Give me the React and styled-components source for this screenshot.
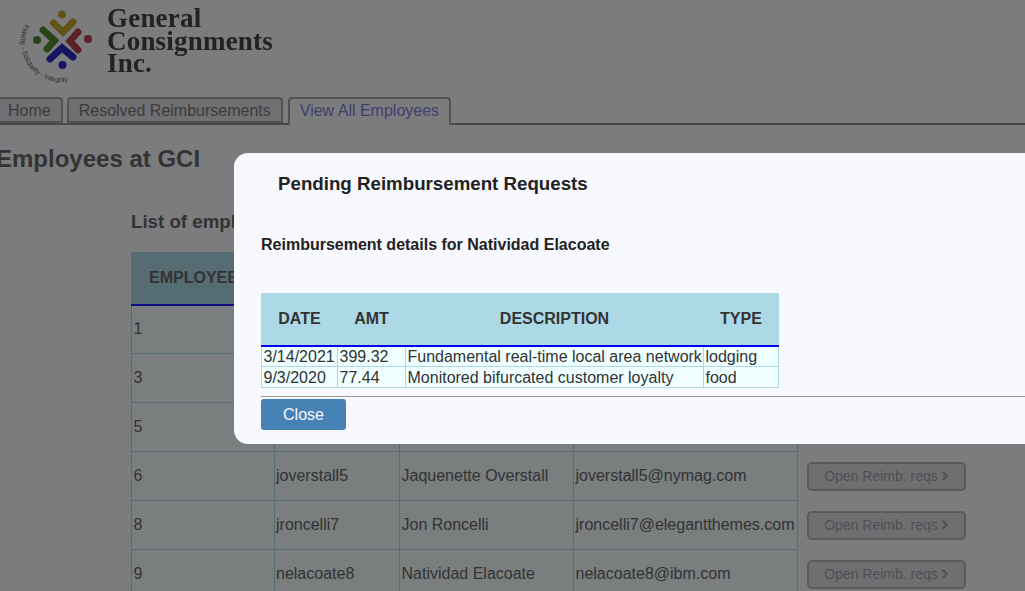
import React from 'react'
import styled, { createGlobalStyle } from 'styled-components'
import { ChevronRight } from 'lucide-react'

const GlobalStyle = createGlobalStyle`
  html, body {
    margin: 0;
    height: 100%;
    overflow: hidden;
    background: #f8f8ff;
  }
  body {
    font-family: "Liberation Sans", Arial, sans-serif;
    font-size: 16px;
    color: #666;
  }
`

const employees = [
  { id: 1, username: '', name: '', email: '' },
  { id: 3, username: '', name: '', email: '' },
  { id: 5, username: '', name: '', email: '' },
  { id: 6, username: 'joverstall5', name: 'Jaquenette Overstall', email: 'joverstall5@nymag.com' },
  { id: 8, username: 'jroncelli7', name: 'Jon Roncelli', email: 'jroncelli7@elegantthemes.com' },
  { id: 9, username: 'nelacoate8', name: 'Natividad Elacoate', email: 'nelacoate8@ibm.com' },
]

const requests = [
  { date: '3/14/2021', amt: '399.32', description: 'Fundamental real-time local area network', type: 'lodging' },
  { date: '9/3/2020', amt: '77.44', description: 'Monitored bifurcated customer loyalty', type: 'food' },
]

const Logo = () => (
  <LogoSvg viewBox="15 5 85 78" width="85" height="78">
    <defs>
      <path id="motto" d="M 25 24 A 40 40 0 0 0 80 77" fill="none" />
    </defs>
    <g fill="none" strokeWidth="7" strokeLinecap="round" strokeLinejoin="miter">
      <path d="M53.5 23 L63 32 L73 22" stroke="#c4a92c" />
      <path d="M78 32 L70 41 L78 50" stroke="#b8404c" />
      <path d="M50 59 L62 48 L73 57" stroke="#2a2ac4" />
      <path d="M43 30 L54.5 40.5 L47 49" stroke="#4f8a2c" />
    </g>
    <circle cx="62" cy="14.5" r="4" fill="#c4a92c" />
    <circle cx="88" cy="39" r="4" fill="#b8404c" />
    <circle cx="62.5" cy="65" r="4" fill="#2a2ac4" />
    <circle cx="37" cy="40" r="4" fill="#4f8a2c" />
    <text fontFamily="Liberation Sans" fontSize="7" fill="#555">
      <textPath href="#motto">Fidelity - Solidarity - Integrity</textPath>
    </text>
  </LogoSvg>
)

export default function App() {
  return (
    <>
      <GlobalStyle />
      <Page>
        <Header>
          <Logo />
          <Brand>General<br />Consignments<br />Inc.</Brand>
        </Header>
        <Tabs>
          <Tab>Home</Tab>
          <Tab>Resolved Reimbursements</Tab>
          <Tab $active>View All Employees</Tab>
        </Tabs>
        <Heading>Employees at GCI</Heading>
        <Content>
          <ListTitle>List of employees</ListTitle>
          <EmployeeTable>
            <thead>
              <tr>
                <EmployeeHead $width={142.5}>EMPLOYEE ID</EmployeeHead>
                <EmployeeHead $width={125.5} />
                <EmployeeHead $width={174} />
                <EmployeeHead $width={224} />
              </tr>
            </thead>
            <tbody>
              {employees.map((e) => (
                <tr key={e.id}>
                  <EmployeeCell>{e.id}</EmployeeCell>
                  <EmployeeCell>{e.username}</EmployeeCell>
                  <EmployeeCell>{e.name}</EmployeeCell>
                  <EmployeeCell>{e.email}</EmployeeCell>
                  <ActionCell>
                    <OpenButton disabled>
                      Open Reimb. reqs <ChevronRight size={14} strokeWidth={3.5} />
                    </OpenButton>
                  </ActionCell>
                </tr>
              ))}
            </tbody>
          </EmployeeTable>
        </Content>
      </Page>
      <Backdrop />
      <Modal>
        <ModalTitle>Pending Reimbursement Requests</ModalTitle>
        <ModalSubtitle>Reimbursement details for Natividad Elacoate</ModalSubtitle>
        <RequestTable>
          <thead>
            <tr>
              <RequestHead $width={76}>DATE</RequestHead>
              <RequestHead $width={68}>AMT</RequestHead>
              <RequestHead $width={298}>DESCRIPTION</RequestHead>
              <RequestHead $width={75}>TYPE</RequestHead>
            </tr>
          </thead>
          <tbody>
            {requests.map((r) => (
              <tr key={r.date}>
                <RequestCell>{r.date}</RequestCell>
                <RequestCell>{r.amt}</RequestCell>
                <RequestCell>{r.description}</RequestCell>
                <RequestCell>{r.type}</RequestCell>
              </tr>
            ))}
          </tbody>
        </RequestTable>
        <Rule />
        <CloseButton>Close</CloseButton>
      </Modal>
    </>
  )
}

const Page = styled.div`
  width: 1025px;
`

const Header = styled.header`
  display: flex;
  align-items: flex-start;
  height: 97px;
  padding: 5px 0 0 15px;
  box-sizing: border-box;
`

const LogoSvg = styled.svg`
  flex: none;
  filter: blur(0.4px);
`

const Brand = styled.div`
  margin: 2px 0 0 7px;
  font-family: "Liberation Serif", "Times New Roman", serif;
  font-size: 27px;
  line-height: 22.5px;
  font-weight: 700;
  letter-spacing: 0.2px;
  color: #444;
  filter: blur(0.3px);
`

const Tabs = styled.nav`
  display: flex;
  gap: 4px;
  height: 28px;
  box-sizing: border-box;
  margin-left: -4px;
  border-bottom: 2px solid #909096;
`

const Tab = styled.div`
  height: ${(p) => (p.$active ? '28px' : '26px')};
  box-sizing: border-box;
  padding: 2px 10px 0;
  border: 2px solid #a4a4aa;
  border-bottom: ${(p) => (p.$active ? 'none' : '2px solid #a4a4aa')};
  border-radius: 4px 4px 0 0;
  margin-left: ${(p) => (p.$active ? '1px' : '0')};
  background: ${(p) => (p.$active ? '#f8f8ff' : '#e0e0e6')};
  color: ${(p) => (p.$active ? '#8080d8' : '#777')};
  line-height: 19px;
`

const Heading = styled.h2`
  margin: 20px 0 0 -4px;
  font-size: 24px;
  line-height: 28px;
  font-weight: 700;
  color: #666;
`

const Content = styled.section`
  margin-left: 131px;
`

const ListTitle = styled.h3`
  margin: 38px 0 0;
  font-size: 18.72px;
  line-height: 21px;
  font-weight: 700;
  color: #666;
`

const EmployeeTable = styled.table`
  margin-top: 20px;
  border-collapse: collapse;
  table-layout: fixed;
  width: 666px;
`

const EmployeeHead = styled.th`
  width: ${(p) => p.$width}px;
  height: 52px;
  padding: 0 0 0 17px;
  box-sizing: border-box;
  background: #add8e6;
  border: 1px solid #add8e6;
  border-bottom: 2px solid #1c1cff;
  text-align: left;
  white-space: nowrap;
  font-size: 16px;
  color: #666;
`

const EmployeeCell = styled.td`
  height: 49px;
  padding: 0 1.5px;
  box-sizing: border-box;
  background: #f4fdff;
  border: 1px solid #add8e6;
  white-space: nowrap;
  color: #666;
`

const ActionCell = styled.td`
  padding: 0 0 0 9px;
`

const OpenButton = styled.button`
  display: flex;
  align-items: center;
  justify-content: center;
  width: 159px;
  height: 29px;
  padding: 0 0 0 3px;
  background: #dedee4;
  border: 2px solid #b4b4ba;
  border-radius: 5px;
  font-family: inherit;
  font-size: 14px;
  color: #a0a0a6;
  white-space: nowrap;
`

const Backdrop = styled.div`
  position: fixed;
  inset: 0;
  background: rgba(0, 0, 0, 0.5);
`

const Modal = styled.div`
  position: fixed;
  top: 153px;
  left: 234px;
  width: 900px;
  height: 291px;
  box-sizing: border-box;
  padding: 0 0 0 27px;
  background: #f8f8ff;
  border-radius: 14px;
  color: #333;
`

const ModalTitle = styled.h3`
  margin: 20px 0 0 17px;
  font-size: 18.72px;
  line-height: 21px;
  font-weight: 700;
  color: #222;
`

const ModalSubtitle = styled.h4`
  margin: 41px 0 0;
  font-size: 16px;
  line-height: 19px;
  font-weight: 700;
  color: #222;
`

const RequestTable = styled.table`
  margin-top: 39px;
  border-collapse: collapse;
  table-layout: fixed;
  width: 517px;
`

const RequestHead = styled.th`
  width: ${(p) => p.$width}px;
  height: 52px;
  padding: 0;
  box-sizing: border-box;
  background: #add8e6;
  border: 1px solid #add8e6;
  border-bottom: 2px solid #0000ee;
  font-size: 16px;
  text-align: center;
`

const RequestCell = styled.td`
  height: 21px;
  padding: 0 1.5px;
  box-sizing: border-box;
  background: #f0ffff;
  border: 1px solid #add8e6;
  line-height: 19px;
  white-space: nowrap;
`

const Rule = styled.hr`
  margin: 8px 0 2px;
  border: none;
  border-top: 1px solid #999;
`

const CloseButton = styled.button`
  display: block;
  width: 85px;
  height: 31px;
  padding: 0;
  background: #4682b4;
  border: none;
  border-radius: 3px;
  font-family: inherit;
  font-size: 16px;
  color: #f8f8ff;
`
